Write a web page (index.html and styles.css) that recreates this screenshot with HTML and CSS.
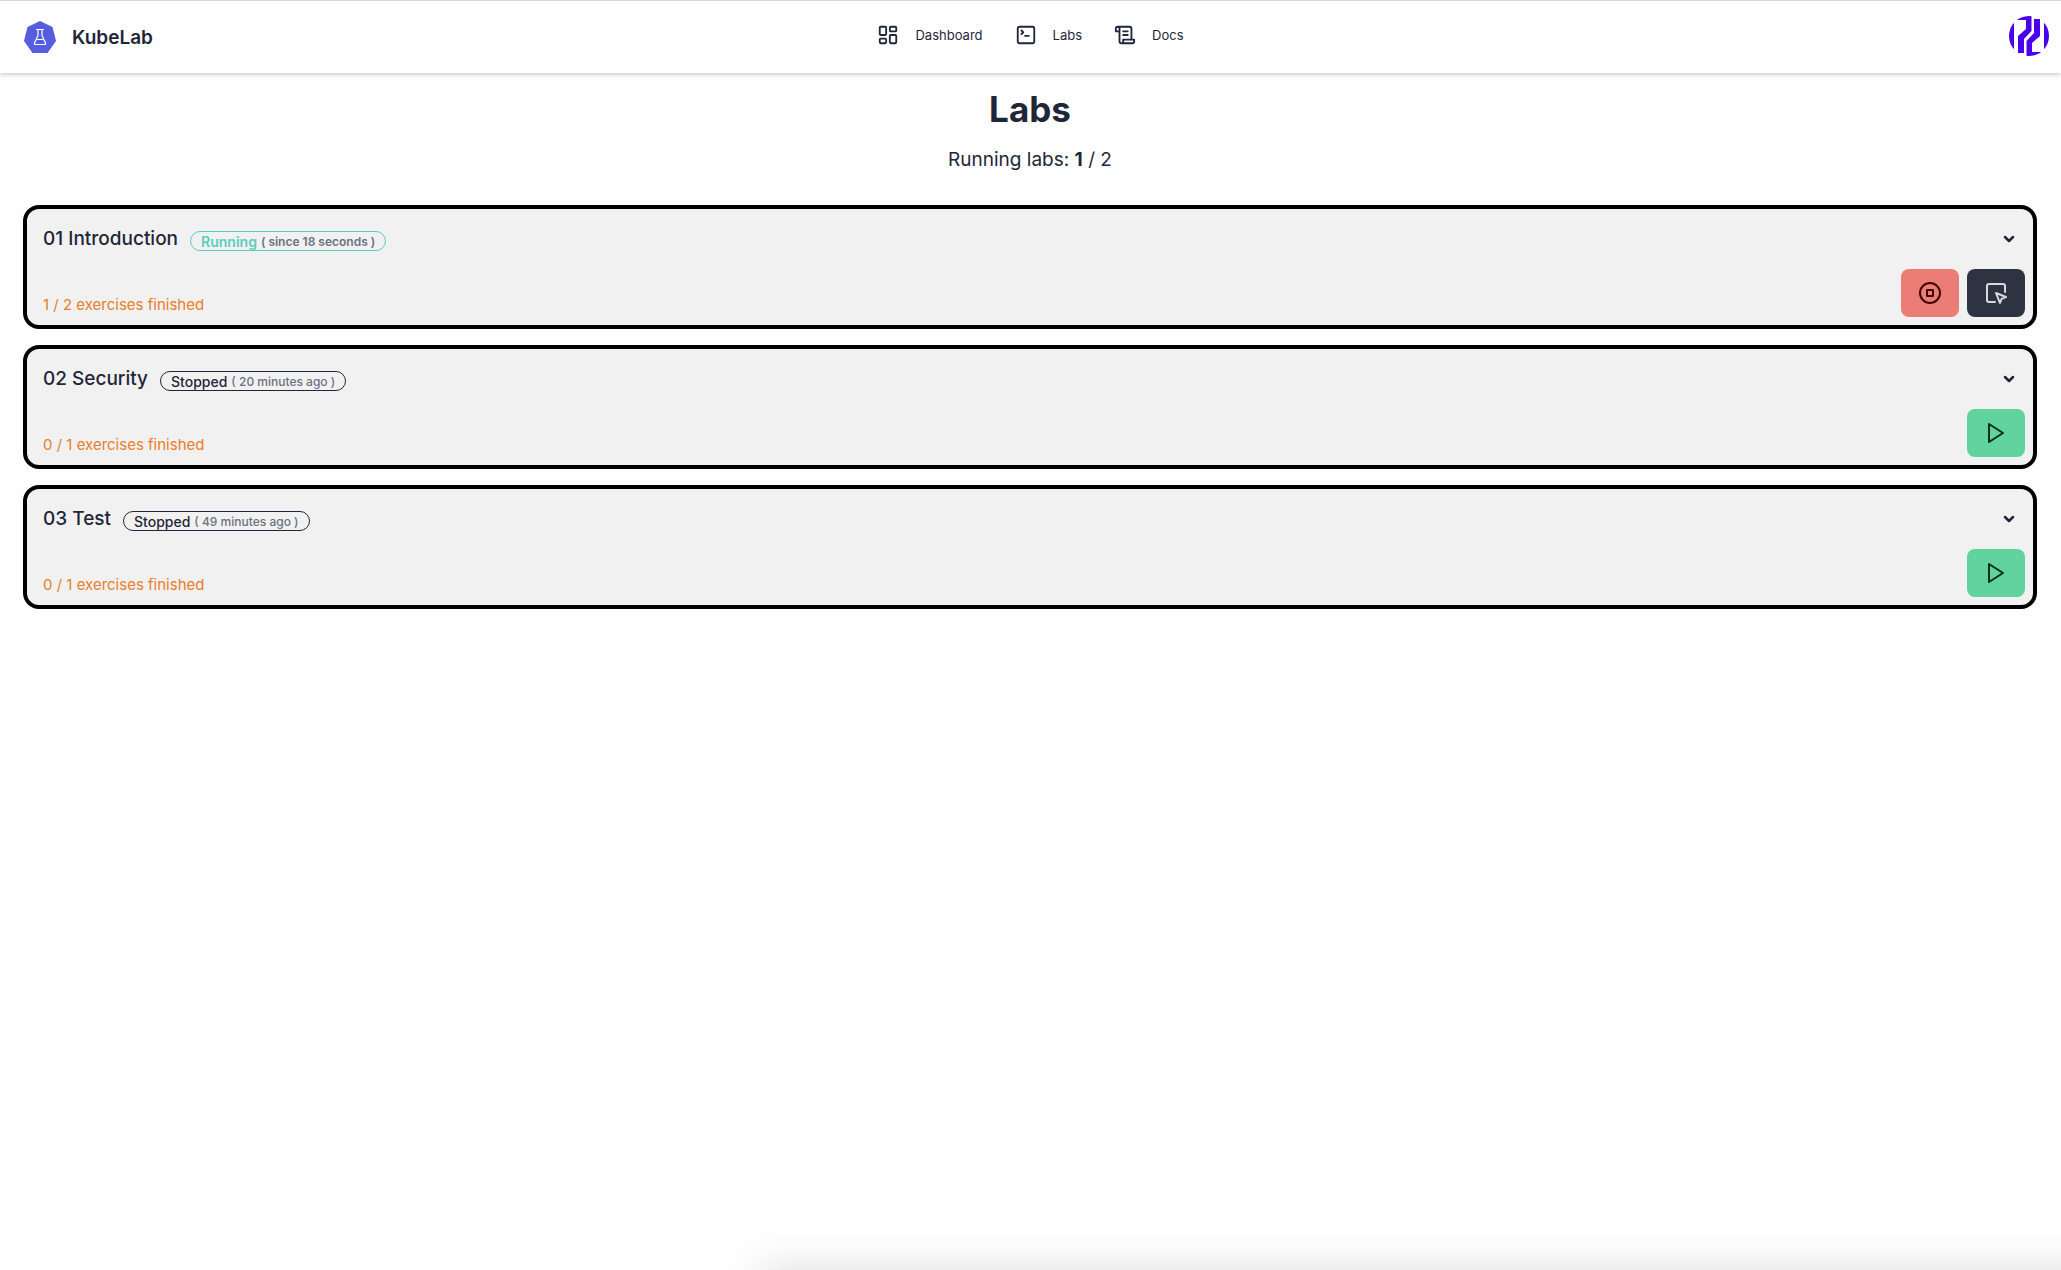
FILE: index.html
```html
<!DOCTYPE html>
<html lang="en">
<head>
<meta charset="utf-8">
<meta name="viewport" content="width=device-width, initial-scale=1">
<title>KubeLab</title>
<link rel="stylesheet" href="styles.css">
</head>
<body>
<header class="navbar">
  <a class="brand" href="#">
    <svg class="brand-logo" viewBox="0 0 32 32" aria-hidden="true">
      <path d="M16 0 28.500 6 32 20 23.500 32H8.500L0 20 3.500 6z" fill="#555ee0"/>
      <path d="M12.500 8.500h7M14 8.500v6L10.500 22q-.5 1.500 1 1.500h9q1.500 0 1-1.500L18 14.500v-6M12.500 18.500h7" fill="none" stroke="#fff" stroke-width="1.200"/>
    </svg>
    <span>KubeLab</span>
  </a>
  <nav class="menu">
    <a class="menu-link" href="#"><svg class="icon" viewBox="0 0 24 24"><rect x="3" y="3" width="7" height="9" rx="1"/><rect x="14" y="3" width="7" height="5" rx="1"/><rect x="14" y="12" width="7" height="9" rx="1"/><rect x="3" y="16" width="7" height="5" rx="1"/></svg>Dashboard</a>
    <a class="menu-link" href="#"><svg class="icon" viewBox="0 0 24 24"><path d="m7 11 2-2-2-2M11 13h4"/><rect x="3" y="3" width="18" height="18" rx="2"/></svg>Labs</a>
    <a class="menu-link" href="#"><svg class="icon" viewBox="0 0 24 24"><path d="M8 21h12a2 2 0 0 0 2-2v-2H10v2a2 2 0 1 1-4 0V5a2 2 0 1 0-4 0v3h4M19 17V5a2 2 0 0 0-2-2H4M15 8h-5M15 12h-5"/></svg>Docs</a>
  </nav>
  <button class="avatar" type="button" aria-label="Account">
    <svg viewBox="0 0 40 40"><clipPath id="disc"><circle cx="20" cy="20" r="20"/></clipPath><g clip-path="url(#disc)" fill="#4a00ec"><path d="M0 0h5v40H0zM35 0h5v40h-5zM8 0H22.500V15L15 23V37H9V20L17 13V4H8zM32 40H17.500V25L25 17V3H31V20L23 27V36H32z"/></g></svg>
  </button>
</header>

<main class="page">
  <h1 class="title">Labs</h1>
  <p class="summary">Running labs: <strong>1</strong> / 2</p>

  <div class="labs">
    <article class="lab">
      <div class="lab-head">
        <h2 class="lab-name">01 Introduction</h2>
        <span class="badge badge-running">Running <small>( since 18 seconds )</small></span>
        <button class="toggle" type="button" aria-label="Show exercises"><svg viewBox="0 0 12 8"><path d="m2 2 4 4 4-4"/></svg></button>
      </div>
      <div class="lab-foot">
        <p class="progress">1 / 2 exercises finished</p>
        <div class="actions">
          <button class="btn btn-stop" type="button" aria-label="Stop"><svg class="icon" viewBox="0 0 24 24"><circle cx="12" cy="12" r="10"/><path d="M9 9h6v6H9z"/></svg></button>
          <button class="btn btn-open" type="button" aria-label="Open"><svg class="icon" viewBox="0 0 24 24"><path d="m12 12 4 10 1.700-4.300L22 16ZM21 11V5a2 2 0 0 0-2-2H5a2 2 0 0 0-2 2v14a2 2 0 0 0 2 2h6"/></svg></button>
        </div>
      </div>
    </article>
    <article class="lab">
      <div class="lab-head">
        <h2 class="lab-name">02 Security</h2>
        <span class="badge">Stopped <small>( 20 minutes ago )</small></span>
        <button class="toggle" type="button" aria-label="Show exercises"><svg viewBox="0 0 12 8"><path d="m2 2 4 4 4-4"/></svg></button>
      </div>
      <div class="lab-foot">
        <p class="progress">0 / 1 exercises finished</p>
        <div class="actions">
          <button class="btn btn-start" type="button" aria-label="Start"><svg class="icon" viewBox="0 0 24 24"><path d="m5 3 14 9-14 9Z"/></svg></button>
        </div>
      </div>
    </article>
    <article class="lab">
      <div class="lab-head">
        <h2 class="lab-name">03 Test</h2>
        <span class="badge">Stopped <small>( 49 minutes ago )</small></span>
        <button class="toggle" type="button" aria-label="Show exercises"><svg viewBox="0 0 12 8"><path d="m2 2 4 4 4-4"/></svg></button>
      </div>
      <div class="lab-foot">
        <p class="progress">0 / 1 exercises finished</p>
        <div class="actions">
          <button class="btn btn-start" type="button" aria-label="Start"><svg class="icon" viewBox="0 0 24 24"><path d="m5 3 14 9-14 9Z"/></svg></button>
        </div>
      </div>
    </article>
  </div>
</main>
<div class="drawer-shadow"></div>
</body>
</html>
```
FILE: styles.css
```css
* { box-sizing: border-box; }
body, h1, h2, p { margin: 0; }
body {
  min-height: 100vh;
  background: #fefefe;
  color: #1f2638;
  font-family: Inter, "Liberation Sans", sans-serif;
}
button { padding: 0; border: 0; background: none; cursor: pointer; }
a { color: inherit; text-decoration: none; }
svg { display: block; fill: none; stroke-linecap: round; stroke-linejoin: round; }
.icon { width: 22px; height: 22px; stroke: currentColor; stroke-width: 2; }

.navbar {
  display: grid;
  grid-template-columns: 1fr auto 1fr;
  align-items: center;
  height: 73px;
  padding: 0 24px;
  border-top: 1px solid #d8d8d8;
  background: #fff;
  box-shadow: 0 1px 5px rgb(0 0 0 / 25%);
}
.brand { display: flex; align-items: center; gap: 16px; font-size: 19px; font-weight: 600; }
.brand-logo { width: 32px; height: 32px; }
.menu { display: flex; gap: 32px; padding-bottom: 4px; }
.menu-link { display: flex; align-items: center; gap: 16px; font-size: 13px; line-height: 20px; }
.avatar { justify-self: end; width: 40px; height: 40px; margin: 0 -12px 2px 0; }

.page { padding: 16px 24px 16px 23px; }
.title { font-size: 35px; line-height: 40px; font-weight: 700; text-align: center; }
.summary { margin-top: 16px; font-size: 19px; line-height: 30px; text-align: center; }

.labs { display: grid; gap: 16px; margin-top: 30px; }
.lab {
  display: grid;
  gap: 14px;
  padding: 14px 8px 8px 16px;
  border: 4px solid #000;
  border-radius: 16px;
  background: #f1f1f1;
}
.lab-head { display: flex; align-items: center; gap: 12px; height: 32px; }
.lab-name { font-size: 19px; line-height: 28px; font-weight: 500; }
.badge {
  display: flex;
  align-items: center;
  gap: 4px;
  height: 20px;
  margin-top: 4px;
  padding: 0 10px;
  border: 1px solid currentColor;
  border-radius: 10px;
  font-size: 14px;
  font-weight: 500;
}
.badge small { color: #6b7280; font-size: 12px; }
.badge-running { color: #5bcdbb; font-weight: 600; }
.toggle { display: grid; place-items: center; width: 32px; height: 32px; margin-left: auto; }
.toggle svg { width: 12px; height: 8px; stroke: #1f2638; stroke-width: 2.5; }
.lab-foot { display: flex; align-items: flex-end; justify-content: space-between; }
.progress { color: #e97d29; font-size: 15px; line-height: 24px; }
.actions { display: flex; gap: 8px; }
.btn { display: grid; place-items: center; width: 58px; height: 48px; border-radius: 8px; }
.btn .icon { width: 24px; height: 24px; }
.btn-stop { background: #eb7c76; color: #3d0705; }
.btn-open { background: #2d3340; color: #d5dae2; }
.btn-start { background: #60d39e; color: #0b2c1d; }

/* Edge of the panel that sits below the window */
.drawer-shadow {
  position: fixed;
  top: 100%;
  right: -60px;
  left: 37%;
  height: 40px;
  box-shadow: 0 0 40px rgb(0 0 0 / 14%);
}
```
